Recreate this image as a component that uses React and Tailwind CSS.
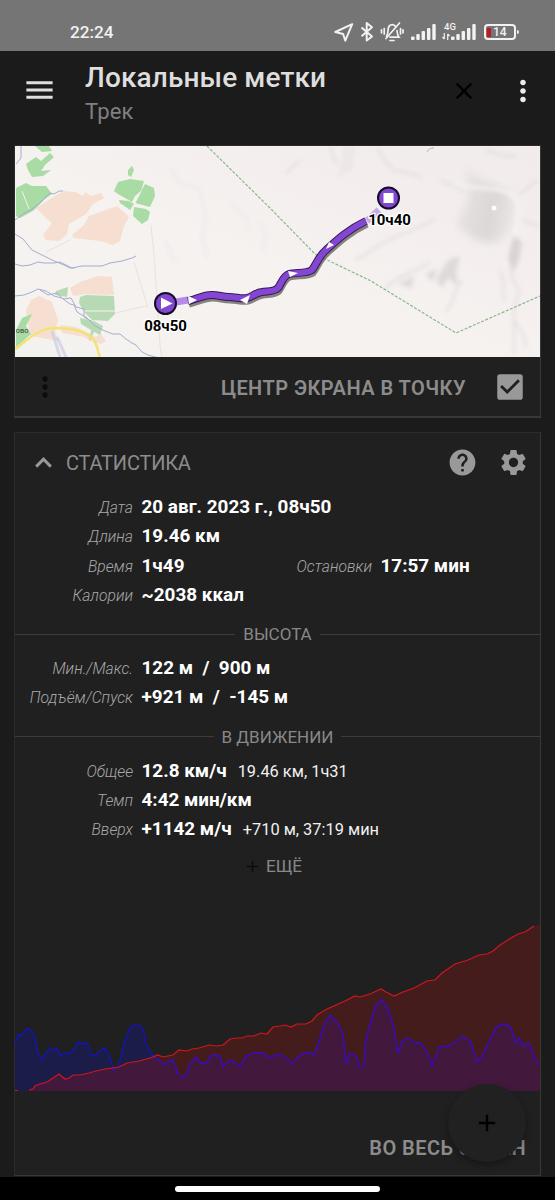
import { MdAdd, MdCheckBox, MdClose, MdHelp, MdMenu, MdMoreVert, MdSettings } from 'react-icons/md';

const elevation =
  '29,1090 33,1089 35,1086 40,1084 47,1082 53,1078 59,1074 65,1079 69,1078 73,1075 80,1075 89,1073 96,1071 105,1069 112,1068 119,1067 127,1063 139,1061 150,1058 158,1055 163,1057 173,1055 179,1050 187,1051 192,1049 199,1048 209,1045 217,1046 223,1045 230,1039 237,1038 242,1038 247,1036 254,1036 261,1033 267,1034 273,1027 280,1026 285,1025 291,1027 297,1024 306,1024 312,1021 317,1015 327,1009 336,1005 345,1001 355,996 360,997 370,994 381,989 386,992 394,996 403,992 414,988 427,981 435,980 442,973 455,964 468,960 479,955 487,954 493,951 500,945 511,938 518,934 525,932 534,926';

const speed =
  '15,1044 18,1034 21,1036 26,1029 28,1028 33,1033 36,1042 38,1054 42,1060 46,1053 50,1048 54,1051 57,1048 60,1055 65,1053 70,1053 75,1048 78,1042 83,1044 87,1043 92,1055 95,1056 99,1051 105,1048 110,1058 114,1071 120,1061 124,1043 130,1028 135,1024 141,1026 144,1033 146,1044 152,1055 160,1061 164,1065 169,1061 173,1060 178,1073 181,1077 186,1076 190,1064 196,1057 200,1063 206,1063 212,1055 220,1056 223,1067 230,1060 240,1066 247,1055 254,1053 263,1053 270,1058 278,1054 283,1056 292,1063 300,1055 307,1052 314,1055 318,1044 325,1023 330,1015 338,1024 343,1034 346,1064 350,1053 356,1056 360,1067 364,1066 366,1038 370,1024 376,1005 382,1000 388,1009 394,1028 398,1053 402,1041 408,1038 415,1043 420,1043 427,1051 432,1066 439,1047 448,1046 455,1042 463,1036 471,1042 477,1062 482,1056 489,1042 496,1027 502,1024 508,1025 512,1030 516,1043 519,1038 523,1046 529,1043 534,1056 539,1065';

const Signal = () => (
  <svg className="h-6 w-[25px]" viewBox="0 0 25 24" fill="#f2f2f2">
    <rect x="0" y="16.5" width="3.6" height="3.5" rx="1" />
    <rect x="5.3" y="14" width="3.4" height="6" rx="1" />
    <rect x="10.6" y="11" width="3.4" height="9" rx="1" />
    <rect x="16" y="8" width="3.4" height="12" rx="1" />
    <rect x="21.3" y="4" width="3.4" height="16" rx="1" />
  </svg>
);

const StatusBar = () => (
  <div className="flex h-[51px] shrink-0 items-start bg-[#757575] pl-[70px] pt-5 text-[#f2f2f2]">
    <span className="w-[264px] text-[17.2px] font-medium leading-6">22:24</span>
    <svg className="h-6 w-5" viewBox="0 0 20 24" fill="none" stroke="#f2f2f2" strokeWidth="2" strokeLinejoin="round">
      <path d="M18.2 4.2 1.3 12l7.8 2 2.2 6.6z" />
    </svg>
    <svg className="ml-[6px] h-6 w-[14px]" viewBox="0 0 14 24" fill="none" stroke="#f2f2f2" strokeWidth="2" strokeLinejoin="round">
      <path d="M1.5 7.5l10.5 9-5.3 4V3L12 7.2l-10.5 9" />
    </svg>
    <svg className="ml-[6px] h-6 w-6" viewBox="0 0 24 24" fill="none" stroke="#f2f2f2" strokeWidth="1.7" strokeLinecap="round">
      <path d="M6.5 16.2c1.3-1.4 1.3-3.2 1.5-6 .2-3 1.8-5.6 4.3-5.6 1.6 0 2.8.9 3.5 2.2M17 10.5c.2 3 .4 4.8 2 6.7H10" />
      <path d="M19.5 3 6 18.5M10 20.5h4M4.2 8.5v5.5M1.5 9.8v3M20.5 8.5v5.5M23 9.8v3" />
    </svg>
    <div className="ml-[7px]"><Signal /></div>
    <div className="relative ml-[15px]">
      <Signal />
      <span className="absolute -left-[7px] top-px text-[9.5px] font-medium leading-3">4G</span>
      <svg className="absolute -left-[9px] top-[13px] h-[7px] w-2" viewBox="0 0 8 7" fill="none" stroke="#f2f2f2" strokeWidth="1.2">
        <path d="M2.3 0v6M.5 4l1.8 2.2M5.7 7V1M7.5 3 5.7.8" />
      </svg>
    </div>
    <div className="ml-[8px] mt-[4px] flex items-center">
      <div className="flex h-4 w-8 items-center rounded-[4px] border-2 border-[#f2f2f2] pl-px">
        <div className="h-[9px] w-1 bg-[#c8141c]"></div>
        <span className="ml-[2px] text-[12px] font-medium leading-3">14</span>
      </div>
      <div className="ml-px h-1 w-[2px] rounded-r bg-[#f2f2f2]"></div>
    </div>
  </div>
);

const Header = () => (
  <div className="flex h-[79px] shrink-0 bg-[#1b1b1b] pl-[22px]">
    <MdMenu className="mt-[21px] h-9 w-[35px] text-[#dedede]" />
    <div className="ml-[28px] mt-[10px] w-[365px]">
      <div className="text-[28px] font-medium leading-[34px] tracking-[0.12px] text-[#dedede]">Локальные метки</div>
      <div className="mt-[3px] text-[22px] leading-7 tracking-[0.2px] text-[#808080]">Трек</div>
    </div>
    <MdClose className="mt-[26px] size-7 text-black" />
    <MdMoreVert className="ml-[28px] mt-[23px] size-[34px] text-[#ececec]" />
  </div>
);

const trackPath =
  'M188 301 C197 299 203 295 212 295 C219 295 222 297 229 297 C236 297 241 299 247 298 C252 297 255 293 262 292 C268 291 274 292 278 288 C281 284 283 276 289 274 C296 272 306 274 312 270 C317 263 319 256 326 250 C338 239 349 229 366 221';

const TrackMap = () => (
  <svg className="block h-[211px] w-[525px]" viewBox="15 146 525 211">
    <defs>
      <linearGradient id="land" x1="0" x2="1" y1="1" y2="0">
        <stop offset="0" stopColor="#f4f2ee" />
        <stop offset="0.45" stopColor="#f6f2f0" />
        <stop offset="1" stopColor="#f1ebeb" />
      </linearGradient>
      <linearGradient id="cone" x1="0" x2="1" y1="0" y2="0.3">
        <stop offset="0" stopColor="#ece7e7" />
        <stop offset="0.7" stopColor="#dcd7d7" />
        <stop offset="1" stopColor="#e8e3e3" />
      </linearGradient>
      <filter id="soft" x="-20%" y="-20%" width="140%" height="140%">
        <feGaussianBlur stdDeviation="2" />
      </filter>
      <filter id="softer" x="-30%" y="-30%" width="160%" height="160%">
        <feGaussianBlur stdDeviation="4" />
      </filter>
    </defs>
    <rect x="15" y="146" width="525" height="211" fill="url(#land)" />

    {/* hill shading */}
    <path d="M466 166c8 10 16 14 26 18l18 8 6 16-4 22-18 14-22-6-16-14 12-24z" filter="url(#softer)" fill="url(#cone)" />
    <g filter="url(#soft)">
      <path d="M514 236l8 6-2 16-6 14-6-14z" fill="#dcd6d7" />
      <path d="M448 260l12-4-4 16 2 14-10-8-6 10-6-8zM426 274l12-6-6 14zM398 284l16-8-2 12z" fill="#dfd9da" />
      <path d="M450 186c16 0 34 2 50 4c14 2 20 12 18 24c-2 8 0 14-4 20" fill="none" stroke="#f8f4f4" strokeWidth="3" />
    </g>
    <g filter="url(#soft)" fill="none" stroke="#cfc8c9" strokeOpacity="0.5" strokeWidth="2">
      <path d="M435 219c-18 10-34 14-50 23c-10 5-16 12-30 18M430 262c-14 10-34 14-44 26M462 280c-8 8-6 18-16 32M500 270c6 14 2 20 4 32M515 240c-2 14-4 24-4 36l8 14-5 20v44M514 320l10 16 2 12" />
      <path d="M538 180l-18 14M540 226l-18-6M330 146c2 8 3 12 8 18M345 146c2 12 0 20-5 30M352 146c0 10-1 18-4 26M378 148c4 12 14 18 18 26M398 170c10 5 16 2 24 8M300 160c-6 8-10 6-14 14M486 150c10 2 18 8 30 6M440 180c10 6 14 4 24 12" />
    </g>
    <g filter="url(#soft)" fill="none" stroke="#ece3e6" strokeWidth="1.5">
      <path d="M200 190l6 26-4 22 6 20M170 168l10 16 20 4M230 200c6 14 20 10 18 30M258 220l8 16-4 16M165 240c8 12 4 20 12 22" />
    </g>
    <circle cx="494" cy="208" r="2.5" fill="#fff" fillOpacity="0.9" />
    <path d="M427 152c1-3 4-4 7-4" fill="none" stroke="#bdb7b7" />

    {/* fields */}
    <g fill="#f6dfd0">
      <path d="M36 208l27-17 12 1 8 4 2-4 6 4 10-3 3 5-11 6-7 10-17 10-2 10-8 7-13-1-3-5 9-12-8-7z" />
      <path d="M72 235l12-10 5-9 14-5 14-5 12 11-5 9-4 15-7 4-13-4-26-3z" />
      <path d="M70 288l10-6 18-6 14 1 2 18-28-1-13 2z" />
      <path d="M31 300l8-4 13 6 6 18-3 12 4 9-29-5-4-26z" />
      <path d="M60 325l16 2 20 10 4-4 6 8-5 3-11-3-6-4-22-4z" />
    </g>
    <g fill="#a9dba4">
      <path d="M26 164l10-7 5 4 9-8 4 4-9 8-4 6 10-1-8 6-11 1-4-7zM35 146h14l3 5-10 1z" />
      <path d="M16 188l10-5 6 3 14 0 6 8-7 5-12 12-13 7-4-2z" />
      <path d="M128 170l4-4 2 4-3 7-3-2zM118 182l12-3 14 2-3 10-6 5-3 6-14-8-4-3z" />
      <path d="M145 184l9 4 1 8-5 11-15-4zM134 207l12 2 4 3-2 8-6 4-9-8zM119 200l10 1 5 3-4 6-10-7z" />
      <path d="M16 330l6-12 10-4-6 12 5 8-10 9-5 4z" />
    </g>
    <g fill="#b7dab5">
      <path d="M80 297l6-2 28 1 1 18-7 7-16-1-8-8-5-9z" />
      <path d="M80 318l14 3 9 5-3 9-6-3-5 10 2-12-10-6zM56 291l12-4-1 10-12-2z" />
    </g>
    <path d="M22 191l7 18M82 311l33 0M141 191l-8 16" fill="none" stroke="#f4f2ee" />

    {/* roads and rivers */}
    <path d="M151 225l3 30 6 90 2 12M134 262l14 46M115 313l31-7M46 252l24-12" fill="none" stroke="#e6e2e0" />
    <g fill="none" stroke="#a5add0" strokeWidth="1">
      <path d="M15 220l8-6 9-5 10-8 8-8 4 1 5-3 4 0" />
      <path d="M15 234l8 5 9 11 10 5 10 5 12 5 6 3 5 0" />
      <path d="M15 264l7 2 8-1 8-3 6 1 10 0 6-1 8 4 4 2 10-2 12 0 8 0 8-3 12-2 10-3 4-2" />
      <path d="M15 296l9-1 8-3 6-3 8 2 8 5 8 2 8 6 4 1 3 7 5 3 5 3 8 8 10 5 8 3 7 0 6 5 6 4 4 2 6 7 6 3 11 3" />
      <path d="M40 290l8 5 9-2 6 6 8-1 5 9 8 2 0 8 7 4M21 146v12l-5 6" />
    </g>
    <path d="M52 331l8 26M57 337l9 20" fill="none" stroke="#c9cde6" strokeWidth="3" strokeOpacity="0.7" />
    <path d="M15 349c10-6 20-20 40-21c20 0 32 5 37 10c6 6 5 12 8 19" fill="none" stroke="#f4e277" strokeWidth="2.5" />
    <text x="15.8" y="332.5" fontSize="7.5" fill="#444">ово</text>

    <path d="M207 146l63 62 45 46 56 27 85 52 84-37" fill="none" stroke="#89b989" strokeWidth="1.2" strokeDasharray="3 1.5" />

    {/* track */}
    <path d={trackPath} transform="translate(1 3)" fill="none" stroke="#6c665f" strokeOpacity="0.8" strokeWidth="7" />
    <path d="M176 302l12-2" stroke="#b58be8" strokeWidth="7" />
    <path d="M367 221l12-11" stroke="#c7aaea" strokeWidth="7" />
    <path d={trackPath} fill="none" stroke="#311a58" strokeWidth="8" />
    <path d={trackPath} fill="none" stroke="#8646d4" strokeWidth="6" />
    <g fill="#fff">
      <path d="M188 296l9 4-8 4zM240 300l10-5-3 9zM288 271l10 2-8 4zM326 249l3-7 5 3z" />
    </g>
    <circle cx="165.5" cy="303.5" r="10.5" fill="#8247cf" stroke="#150b2b" strokeWidth="2" />
    <path d="M161 297.5l11.5 6-11.5 5.5z" fill="#fff" />
    <circle cx="388.5" cy="198" r="10.5" fill="#8247cf" stroke="#150b2b" strokeWidth="2" />
    <rect x="383.5" y="193" width="10" height="10" fill="#fff" />
    <g fontSize="15" fontWeight="700" fill="#000" stroke="#fff" strokeWidth="2.5" paintOrder="stroke" textAnchor="middle">
      <text x="165.5" y="331">08ч50</text>
      <text x="389.5" y="225">10ч40</text>
    </g>
  </svg>
);

const Row = ({ label, value, note }) => (
  <div className="flex h-[29.3px] items-baseline whitespace-pre">
    <span className="w-[118px] shrink-0 text-right text-[15.7px] font-light italic leading-[29px] text-[#a8a8a8]">{label}</span>
    <span className="ml-[8.5px] text-[18.9px] font-bold leading-[29px] text-white">{value}</span>
    {note && <span className="ml-[11px] text-[16.4px] leading-[29px] text-[#f0f0f0]">{note}</span>}
  </div>
);

const Divider = ({ text }) => (
  <div className="flex h-5 items-center gap-2">
    <div className="h-px flex-1 bg-[#3c3c3c]"></div>
    <span className="text-[17px] leading-5 text-[#888]">{text}</span>
    <div className="h-px flex-1 bg-[#3c3c3c]"></div>
  </div>
);

const Chart = () => (
  <svg className="block h-[175px] w-[525px]" viewBox="15 918 525 175">
    <clipPath id="below">
      <rect x="152" y="918" width="388" height="175" />
    </clipPath>
    <polygon points={`15,1091 ${speed} 540,1091`} fill="#0a0aff" fillOpacity="0.18" />
    <polyline points={speed} fill="none" stroke="#1414b4" strokeWidth="1.4" />
    <polygon points={`${elevation} 540,924 540,1091 29,1091`} fill="#ff0a0a" fillOpacity="0.17" />
    <polyline points={speed} clipPath="url(#below)" fill="none" stroke="#3c0cae" strokeWidth="1.4" />
    <path d="M15 1090.5h3" stroke="#c41820" />
    <polyline points={elevation} fill="none" stroke="#d0161c" strokeWidth="1.2" />
  </svg>
);

const App = () => (
  <div className="relative flex h-[1200px] w-[555px] flex-col overflow-hidden bg-[#1b1b1b] font-['Roboto',sans-serif]">
    <StatusBar />
    <Header />

    <div className="mx-[14px] mt-[15px] h-[273px] shrink-0 border border-b-2 border-[#383838] border-l-[#2b2b2b] border-t-[#2b2b2b] bg-[#202020]">
      <TrackMap />
      <div className="flex h-[60px] items-center pl-[14px]">
        <MdMoreVert className="size-8 text-[#0c0c0c]" />
        <span className="ml-auto mt-[2px] text-[20px] font-semibold tracking-[0.46px] text-[#8c8c8c]">ЦЕНТР ЭКРАНА В ТОЧКУ</span>
        <MdCheckBox className="ml-[27px] mr-[13px] size-[34px] text-[#999]" />
      </div>
    </div>

    <div className="mx-[14px] mt-[14px] flex h-[744px] shrink-0 flex-col border border-[#383838] border-l-[#2b2b2b] border-t-[#2b2b2b] bg-[#202020]">
      <div className="flex h-[59px] shrink-0 items-center pl-[14px]">
        <svg className="size-[29px]" viewBox="0 0 29 29" fill="none" stroke="#999" strokeWidth="3">
          <path d="M7.2 18.6l7.3-7.4 7.3 7.4" />
        </svg>
        <span className="ml-[8px] text-[20px] tracking-[-0.2px] text-[#8c8c8c]">СТАТИСТИКА</span>
        <MdHelp className="ml-auto size-[31px] text-[#999]" />
        <MdSettings className="ml-[20px] mr-[11px] size-[31px] text-[#999]" />
      </div>
      <Row label="Дата" value="20 авг. 2023 г., 08ч50" />
      <Row label="Длина" value="19.46 км" />
      <div className="grid grid-cols-[239px_1fr]">
        <Row label="Время" value="1ч49" />
        <Row label="Остановки" value="17:57 мин" />
      </div>
      <Row label="Калории" value="~2038 ккал" />
      <div className="pb-[9px] pt-[15px]"><Divider text="ВЫСОТА" /></div>
      <Row label="Мин./Макс." value="122 м  /  900 м" />
      <Row label="Подъём/Спуск" value="+921 м  /  -145 м" />
      <div className="pb-[9px] pt-[15px]"><Divider text="В ДВИЖЕНИИ" /></div>
      <Row label="Общее" value="12.8 км/ч" note="19.46 км, 1ч31" />
      <Row label="Темп" value="4:42 мин/км" />
      <Row label="Вверх" value="+1142 м/ч" note="+710 м, 37:19 мин" />
      <div className="mb-[39px] mt-[11px] flex h-6 items-center justify-center pr-[10px]">
        <MdAdd className="mr-1 size-[19px] text-[#0c0c0c]" />
        <span className="text-[17.2px] text-[#888]">ЕЩЁ</span>
      </div>
      <Chart />
      <div className="mt-auto pb-[14px] pr-[14px] text-right text-[20px] font-semibold leading-[26px] tracking-[0.46px] text-[#8c8c8c]">ВО ВЕСЬ ЭКРАН</div>
    </div>

    <div className="mt-auto flex h-[23px] items-center justify-center bg-black">
      <div className="h-[6px] w-[205px] rounded-full bg-white"></div>
    </div>

    <button type="button" className="absolute left-[448px] top-[1084px] flex size-[78px] items-center justify-center rounded-full bg-[#212121] shadow-[0_3px_7px_rgba(0,0,0,0.35)]">
      <MdAdd className="size-7 text-black" />
    </button>
  </div>
);

export default App;
